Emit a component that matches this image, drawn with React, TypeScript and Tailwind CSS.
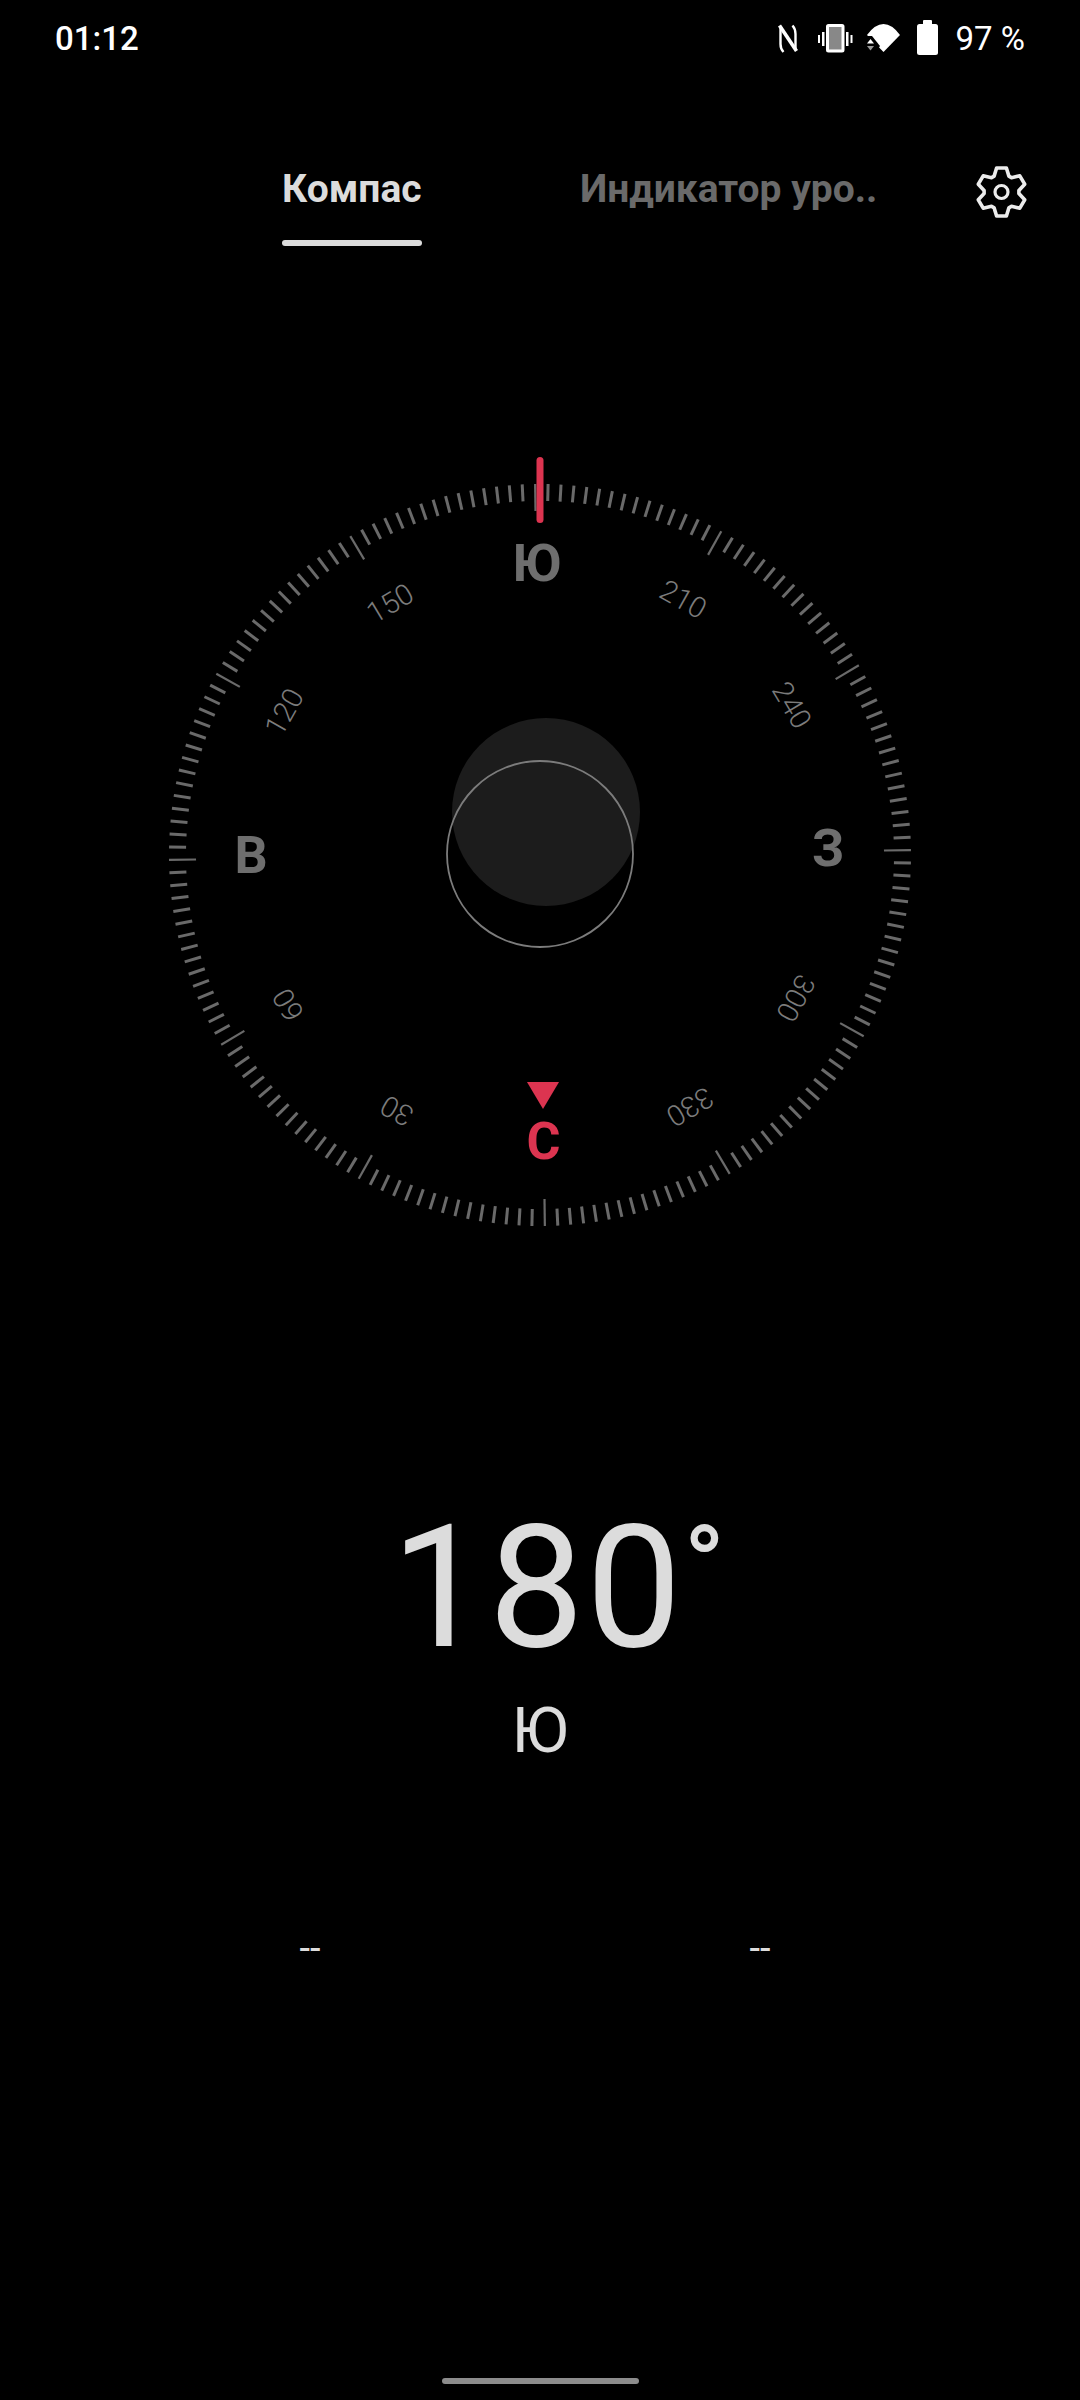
const CX = 540;
const CY = 855;
const DIAL_TILT = -0.75;
const RED = "#dc3450";

const ticks = Array.from({ length: 180 }, (_, i) => i * 2);
const numbers = [30, 60, 120, 150, 210, 240, 300, 330];

function polar(deg: number, r: number) {
  const a = ((deg - 180 + DIAL_TILT) * Math.PI) / 180;
  return { x: CX + r * Math.sin(a), y: CY - r * Math.cos(a) };
}

function gearPoints(cx: number, cy: number) {
  const pts: string[] = [];
  for (let k = 0; k < 6; k++) {
    const a = 60 * k;
    [
      [a - 25, 17.5],
      [a - 11.5, 24.5],
      [a + 11.5, 24.5],
      [a + 25, 17.5],
    ].forEach(([d, r]) => {
      const t = (d * Math.PI) / 180;
      pts.push(`${(cx + r * Math.sin(t)).toFixed(1)},${(cy - r * Math.cos(t)).toFixed(1)}`);
    });
  }
  return pts.join(" ");
}

function StatusIcons() {
  return (
    <svg width="180" height="40" viewBox="775 18 180 40" className="shrink-0">
      {/* nfc */}
      <path d="M780.500 27 L795.500 49.500" fill="none" stroke="#fff" strokeWidth="3.600" strokeLinecap="square" />
      <path d="M795.500 50 L795.500 34 Q795.500 29 792.500 25.500" fill="none" stroke="#fff" strokeWidth="2.400" />
      <path d="M780.500 27 L780.500 44 Q780.500 49 783.500 52" fill="none" stroke="#fff" strokeWidth="2.400" />
      {/* vibrate */}
      <rect x="827.500" y="25.500" width="15.500" height="25.500" fill="#888" stroke="#fff" strokeWidth="3" rx="1" />
      <rect x="818" y="35" width="2" height="8" fill="#fff" />
      <rect x="822" y="32" width="2.500" height="14" fill="#fff" />
      <rect x="846" y="32" width="2.500" height="14" fill="#fff" />
      <rect x="850.500" y="35" width="2" height="8" fill="#fff" />
      {/* wifi */}
      <path d="M867 35 Q875 24 883.500 24 Q892 24 900 35 L883.500 52 Z" fill="#fff" />
      <path d="M864 50 L864 36 L872 36 L880 46 L875 53 Z" fill="#000" />
      <path d="M867 43.500 L874 43.500 L870.500 39 Z" fill="#fff" />
      <path d="M867 46 L874 46 L870.500 50.500 Z" fill="#999" />
      {/* battery */}
      <rect x="923" y="20" width="9" height="6" rx="1" fill="#fff" />
      <rect x="917" y="24" width="21" height="31" rx="2.500" fill="#fff" />
    </svg>
  );
}

function Dial() {
  return (
    <svg width="1080" height="800" viewBox="0 440 1080 800" className="block font-['Roboto',sans-serif]">
      <circle cx="546" cy="812" r="94" fill="#1c1c1c" />
      <circle cx="540" cy="854" r="93" fill="none" stroke="#7c7c7c" strokeWidth="1.800" />

      {ticks.map((d) => {
        const major = d % 30 === 0;
        const a = polar(d, 371);
        const b = polar(d, major ? 344 : 354);
        return (
          <line
            key={d}
            x1={a.x}
            y1={a.y}
            x2={b.x}
            y2={b.y}
            stroke="#6a6a6a"
            strokeWidth={major ? 2.200 : 3}
          />
        );
      })}

      {numbers.map((d) => {
        const p = polar(d, 293);
        return (
          <text
            key={d}
            x={p.x}
            y={p.y}
            textAnchor="middle"
            dominantBaseline="central"
            fontSize="29"
            fontWeight="300"
            fill="#7c7c7c"
            transform={`rotate(${d - 180 + DIAL_TILT} ${p.x} ${p.y})`}
          >
            {d}
          </text>
        );
      })}

      <text x="537" y="581" textAnchor="middle" fontSize="52" fontWeight="700" fill="#6e6e6e">Ю</text>
      <text x="251" y="873" textAnchor="middle" fontSize="52" fontWeight="700" fill="#6e6e6e">В</text>
      <text x="828" y="866" textAnchor="middle" fontSize="52" fontWeight="700" fill="#6e6e6e">З</text>
      <text x="543.500" y="1159" textAnchor="middle" fontSize="52" fontWeight="700" fill={RED}>С</text>

      <rect x="536.500" y="457" width="7" height="66" rx="3.500" fill={RED} />
      <path d="M527 1082 L559 1082 L543 1109 Z" fill={RED} />
    </svg>
  );
}

export default function App() {
  return (
    <div className="flex h-[2400px] w-[1080px] flex-col overflow-hidden bg-black font-['Roboto',sans-serif]">
      <div className="flex h-[76px] items-center justify-between pl-[55px] pr-[55px]">
        <span className="text-[33px] font-medium leading-none text-white">01:12</span>
        <div className="flex items-center">
          <StatusIcons />
          <span className="ml-[1px] text-[33px] leading-none text-white">97 %</span>
        </div>
      </div>

      <div className="relative flex h-[174px] pl-[282px]">
        <div className="flex h-full w-[298px] flex-col">
          <span className="mt-[91px] text-[39px] font-bold leading-[44px] text-[#dcdcdc]">Компас</span>
          <div className="mt-[29px] h-[6px] w-[140px] rounded-full bg-[#dcdcdc]" />
        </div>
        <span className="mt-[91px] text-[39px] font-bold leading-[44px] text-[#6a6a6a]">Индикатор уро..</span>
        <svg width="56" height="56" viewBox="973 164 56 56" className="absolute left-[973px] top-[88px]">
          <polygon points={gearPoints(1001.5, 192)} fill="none" stroke="#ececec" strokeWidth="3.600" strokeLinejoin="round" />
          <circle cx="1001.5" cy="192" r="6.500" fill="none" stroke="#ececec" strokeWidth="3.200" />
        </svg>
      </div>

      <div className="mt-[190px]">
        <Dial />
      </div>

      <div className="mt-[263px] flex h-[170px] justify-center pl-[36px]">
        <span className="text-[170px] leading-[170px] tracking-[2px] text-[#dcdcdc]">180</span>
        <span className="mt-[8px] text-[108px] font-medium leading-[108px] text-[#dcdcdc]">°</span>
      </div>
      <div className="mt-[21px] flex justify-center">
        <span className="text-[63px] leading-[74px] text-[#dcdcdc]">Ю</span>
      </div>

      <div className="ml-[85px] mt-[160px] grid w-[900px] grid-cols-2">
        <span className="text-center text-[38px] leading-[40px] text-[#dcdcdc]">--</span>
        <span className="text-center text-[38px] leading-[40px] text-[#dcdcdc]">--</span>
      </div>

      <div className="mb-[16px] mt-auto flex justify-center">
        <div className="h-[6px] w-[197px] rounded-full bg-[#8c8c8c]" />
      </div>
    </div>
  );
}
